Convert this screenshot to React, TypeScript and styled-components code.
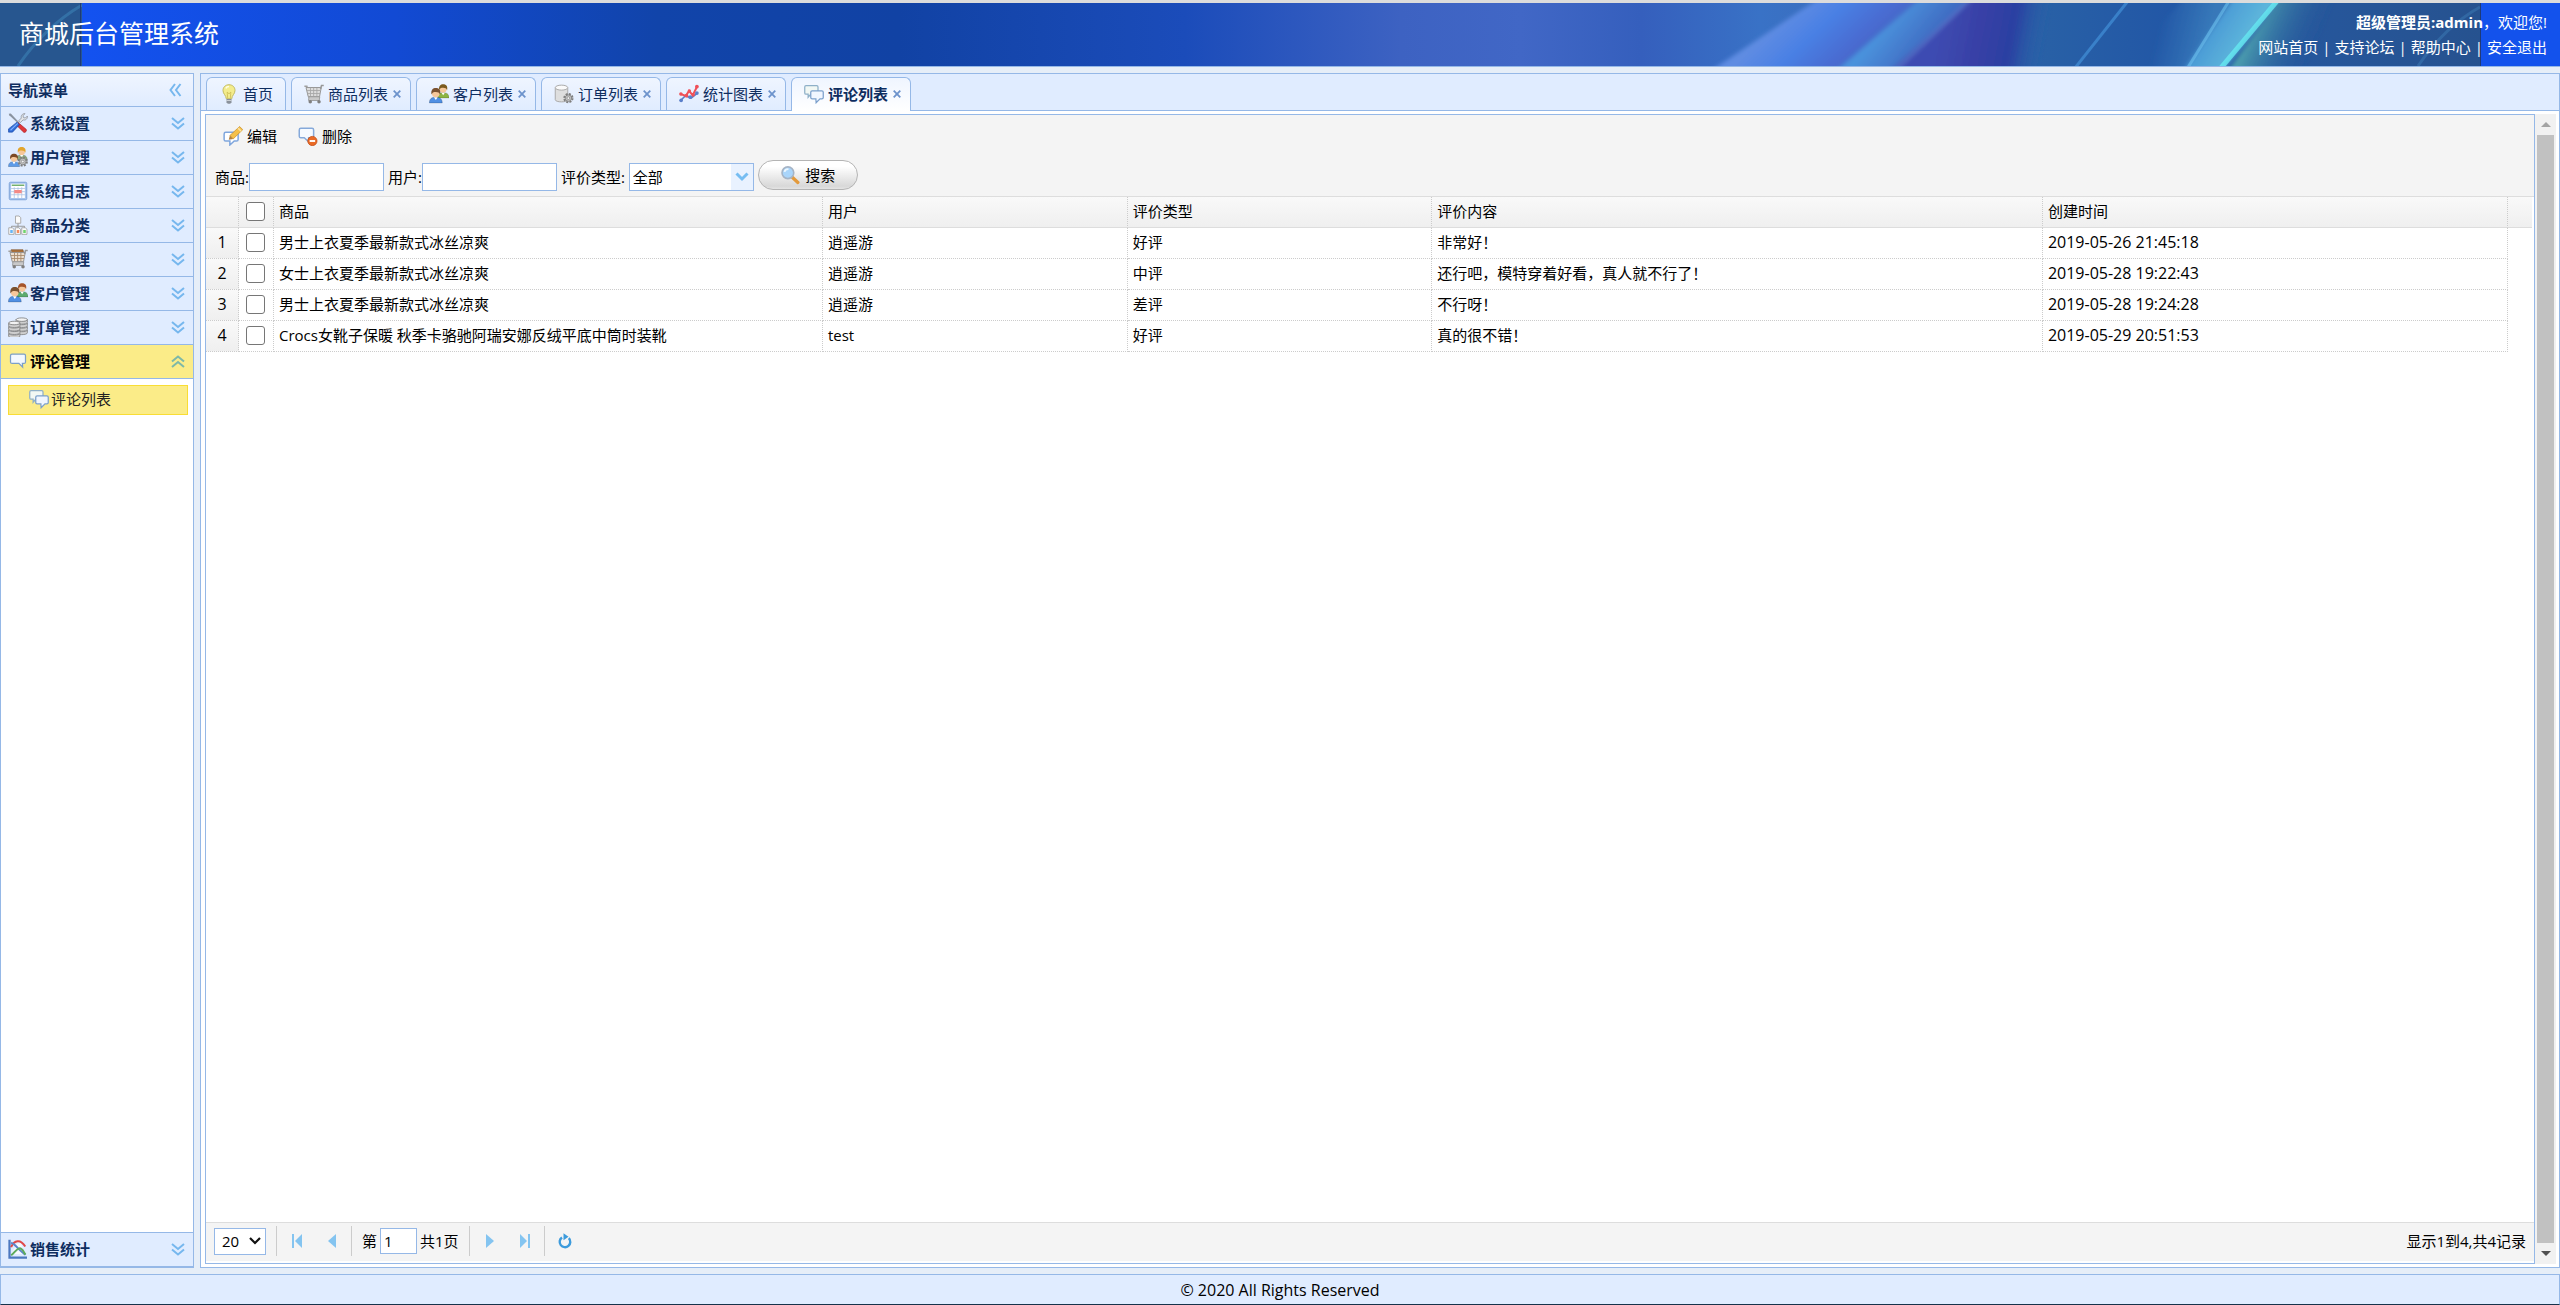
import React from "react";
import styled, { createGlobalStyle, css } from "styled-components";

const GlobalStyle = createGlobalStyle`
  * { box-sizing: border-box; }
  body {
    margin: 0;
    background: #e6eef8;
    color: #000;
    font: 15px/20px "Open Sans", "Noto Sans CJK SC", sans-serif;
  }
  button, input, select { font: inherit; color: inherit; margin: 0; }
`;

const line = "#95b8e7";

const Page = styled.div`
  display: flex;
  flex-direction: column;
  height: 100vh;
  min-width: 1200px;
`;

/* ---------- banner ---------- */

const Banner = styled.header`
  position: relative;
  display: flex;
  justify-content: space-between;
  align-items: center;
  height: 67px;
  flex: none;
  padding: 0 13px 0 19px;
  border-top: 3px solid #dcdcdc;
  border-bottom: 1px solid ${line};
  background: #1352f0;
  color: #fff;
  overflow: hidden;
`;

const BannerArt = styled.svg`
  position: absolute;
  inset: 0;
  width: 100%;
  height: 100%;
`;

const SiteTitle = styled.h1`
  position: relative;
  margin: 0 0 4px;
  font-size: 25px;
  line-height: 32px;
  font-weight: 400;
`;

const Account = styled.div`
  position: relative;
  text-align: right;
  line-height: 25px;
`;

const BannerLinks = styled.nav`
  display: flex;
  justify-content: flex-end;
  gap: 4px;
`;

const BannerLink = styled.a`
  color: #fff;
  text-decoration: none;
`;

/* ---------- frame ---------- */

const Body = styled.div`
  display: flex;
  flex: 1;
  min-height: 0;
  gap: 6px;
  margin: 6px 0;
`;

const Sidebar = styled.aside`
  display: flex;
  flex-direction: column;
  width: 194px;
  flex: none;
  border: 1px solid ${line};
  border-bottom-width: 2px;
  background: #fff;
  color: #0e2d5f;
`;

const SidebarTitle = styled.div`
  display: flex;
  align-items: center;
  justify-content: space-between;
  height: 32px;
  padding: 0 11px 0 7px;
  font-weight: 700;
  background: linear-gradient(#eff5ff, #e0ecff);
`;

const IconButton = styled.button`
  display: flex;
  align-items: center;
  justify-content: center;
  padding: 0;
  border: 0;
  background: none;
`;

const MenuHeading = styled.button<{ $open?: boolean }>`
  display: flex;
  align-items: center;
  gap: 2px;
  width: 100%;
  height: 34px;
  flex: none;
  padding: 0 8px 1px 7px;
  border: 0;
  border-top: 1px solid ${line};
  background: ${(p) => (p.$open ? "#fbec88" : "#e0ecff")};
  color: ${(p) => (p.$open ? "#000" : "#0e2d5f")};
  font-weight: 700;
  text-align: left;

  & > svg:last-child { margin-left: auto; }
`;

const MenuBody = styled.div`
  flex: 1;
  padding: 6px 5px 6px 7px;
  border-top: 1px solid ${line};
`;

const MenuLink = styled.a`
  display: flex;
  align-items: center;
  gap: 2px;
  height: 30px;
  padding: 0 0 2px 20px;
  border: 1px solid #f9dd34;
  background: #fbec88;
  color: #222;
  text-decoration: none;
`;

const Main = styled.main`
  display: flex;
  flex-direction: column;
  flex: 1;
  min-width: 0;
  border: 1px solid ${line};
  background: #fff;
`;

const TabBar = styled.div`
  display: flex;
  align-items: flex-end;
  gap: 5px;
  height: 37px;
  flex: none;
  padding: 3px 5px 0;
  border-bottom: 1px solid ${line};
  background: #e0ecff;
`;

const Tab = styled.div<{ $active?: boolean; $plain?: boolean }>`
  display: flex;
  align-items: center;
  justify-content: center;
  width: ${(p) => (p.$plain ? 80 : 120)}px;
  height: 33px;
  gap: 5px;
  padding: 0 0 1px ${(p) => (p.$plain ? 0 : 3)}px;
  border: 1px solid ${line};
  border-bottom: 0;
  border-radius: 6px 6px 0 0;
  background: linear-gradient(#eff5ff, #e0ecff);
  color: #0e2d5f;
  ${(p) =>
    p.$active &&
    css`
      height: 34px;
      margin-bottom: -1px;
      padding-bottom: 2px;
      background: linear-gradient(#eff5ff, #fff);
      font-weight: 700;
    `}
`;

const TabLabel = styled.button`
  display: flex;
  align-items: center;
  gap: 4px;
  padding: 0;
  border: 0;
  background: none;
  font-weight: inherit;
`;

const TabBody = styled.div`
  display: flex;
  flex: 1;
  min-height: 0;
  padding: 3px 3px 3px 4px;
`;

const Grid = styled.section`
  display: flex;
  flex-direction: column;
  flex: 1;
  min-width: 0;
  border: 1px solid ${line};
`;

const Scrollbar = styled.div`
  display: flex;
  flex-direction: column;
  align-items: center;
  width: 21px;
  flex: none;
  background: #f1f1f1;
`;

const ScrollArrow = styled.div`
  display: flex;
  align-items: center;
  justify-content: center;
  height: 21px;
`;

const ScrollThumb = styled.div`
  flex: 1;
  width: 17px;
  background: #c1c1c1;
`;

/* ---------- toolbar ---------- */

const Toolbar = styled.div`
  height: 82px;
  flex: none;
  border-bottom: 1px solid #ddd;
  background: #f4f4f4;
`;

const ToolRow = styled.div`
  display: flex;
  gap: 21px;
  padding: 11px 0 0 17px;
`;

const ToolButton = styled.button`
  display: flex;
  align-items: center;
  gap: 4px;
  padding: 0;
  border: 0;
  background: none;
`;

const FilterForm = styled.form`
  display: flex;
  align-items: center;
  height: 30px;
  margin-top: 14px;
  padding-left: 9px;
  gap: 4px;
`;

const Field = styled.label`
  display: flex;
  align-items: center;
  height: 28px;
  margin-top: 4px;
`;

const TextBox = styled.input`
  width: 135px;
  height: 28px;
  padding: 0 4px;
  border: 1px solid ${line};
  background: #fff;
`;

const SelectBox = styled.span`
  position: relative;
  display: block;
  margin-left: 4px;
  width: 125px;
  height: 28px;
`;

const Combo = styled.select`
  appearance: none;
  width: 100%;
  height: 100%;
  padding: 0 3px;
  border: 1px solid ${line};
  border-radius: 0;
  background: linear-gradient(#e9f2ff, #e9f2ff) right / 22px 100% no-repeat #fff;
`;

const SelectArrow = styled.svg`
  position: absolute;
  right: 5px;
  top: 9px;
  pointer-events: none;
`;

const SearchButton = styled.button`
  display: flex;
  align-items: center;
  justify-content: center;
  gap: 5px;
  width: 100px;
  height: 30px;
  border: 1px solid #b4b4b4;
  border-radius: 15px;
  background: linear-gradient(#fff 20%, #d8d8d8 90%, #e4e4e4);
`;

/* ---------- table ---------- */

const TableArea = styled.div`
  flex: 1;
  min-height: 0;
  padding-right: 2px;
`;

const Table = styled.table`
  width: 100%;
  table-layout: fixed;
  border-collapse: separate;
  border-spacing: 0;
`;

const Col = styled.col<{ $w?: string }>`
  width: ${(p) => p.$w ?? "auto"};
`;

const cell = css`
  height: 31px;
  padding: 0 5px 2px;
  text-align: left;
  font-weight: 400;
  white-space: nowrap;
  overflow: hidden;
  border-right: 1px dotted #ccc;
`;

const HeadCell = styled.th`
  ${cell}
  border-bottom: 1px solid #ddd;
  background: linear-gradient(#f9f9f9, #efefef);
  &:last-child { border-right: 0; }
`;

const Cell = styled.td`
  ${cell}
  border-bottom: 1px dotted #ccc;
`;

const DateCell = styled(Cell)`
  font-size: 16px;
`;

const RowNumber = styled.th`
  ${cell}
  padding: 0 0 2px;
  font-size: 16px;
  text-align: center;
  border-bottom: 1px dotted #ccc;
  background: linear-gradient(#f9f9f9, #efefef);
`;

const Tick = styled.input`
  appearance: none;
  display: block;
  width: 19px;
  height: 19px;
  margin: 0 0 0 2px;
  border: 1px solid #767676;
  border-radius: 3px;
  background: #fff;
  &:checked { background: #0075ff; }
`;

/* ---------- pager ---------- */

const Pager = styled.div`
  display: flex;
  align-items: center;
  height: 39px;
  flex: none;
  margin-bottom: 2px;
  padding: 0 8px 2px;
  border-top: 1px solid #ddd;
  background: #f4f4f4;
`;

const PageSize = styled(SelectBox)`
  margin: 0 6px 0 0;
  width: 52px;
  height: 27px;
`;

const PageSizeSelect = styled(Combo)`
  padding: 0 7px;
  background: #fff;
`;

const Separator = styled.span`
  width: 1px;
  height: 30px;
  margin: 0 5px 0 4px;
  background: #ccc;
`;

const PagerButton = styled(IconButton)`
  width: 30px;
  height: 30px;
  & + & { margin-left: 5px; }
`;

const PageField = styled.label`
  display: flex;
  align-items: center;
  gap: 3px;
  padding: 0 6px 0 5px;
`;

const PageInput = styled.input`
  width: 37px;
  height: 26px;
  padding: 0 3px;
  border: 1px solid ${line};
  background: #fff;
`;

const Summary = styled.span`
  margin-left: auto;
`;

const Footer = styled.footer`
  height: 31px;
  flex: none;
  padding-top: 5px;
  border: 1px solid ${line};
  border-bottom: 1px solid #16324a;
  background: #e0ecff;
  font-size: 16px;
  text-align: center;
`;

/* ---------- icons ---------- */

const Glyph = ({ children }: { children: React.ReactNode }) => (
  <svg width="20" height="20" viewBox="0 0 16 16" fill="none" aria-hidden="true">
    {children}
  </svg>
);

const Chevrons = ({ up }: { up?: boolean }) => (
  <svg width="14" height="13" viewBox="0 0 14 13" fill="none" stroke={up ? "#7db8a8" : "#76b7ee"} strokeWidth="2" aria-hidden="true">
    {up ? <path d="M1 6.5 7 1.5l6 5M1 12l6-5 6 5" /> : <path d="M1 1l6 5 6-5M1 6.5l6 5 6-5" />}
  </svg>
);

const Collapse = () => (
  <svg width="13" height="14" viewBox="0 0 13 14" fill="none" stroke="#76b7ee" strokeWidth="2" aria-hidden="true">
    <path d="M6 1 1.5 7 6 13M11.5 1 7 7l4.500 6" />
  </svg>
);

const Close = () => (
  <svg width="8" height="8" viewBox="0 0 8 8" stroke="#6d93cc" strokeWidth="1.8" aria-hidden="true">
    <path d="M.7.7l6.600 6.600M7.300.7.7 7.300" />
  </svg>
);

const Tools = () => (
  <Glyph>
    <path d="M.6.6 2.200.3 9 7.500l-.8.8L1 1.800z" fill="#8a93a0" />
    <path d="M8.300 7.800 14.500 13c1 1.100-.8 3.200-2 2.300L6.600 9.600z" fill="#e0383a" stroke="#a31c22" strokeWidth=".5" />
    <path d="M8.500 6.300 10.700 4C10 2.300 11.500.3 13.600.5L12 2.200l.4 1.500 1.500.3 1.600-1.600c.3 2.200-1.500 3.700-3.400 3.100L9.800 7.700z" fill="#e4e6e9" stroke="#9299a2" strokeWidth=".7" />
    <path d="M7.200 7.300 9.200 9.300l-5.600 6H.4v-2.600z" fill="#2f6bd6" stroke="#1a4aa5" strokeWidth=".5" />
    <path d="M2 13.800 7.800 8.300" stroke="#7fb0ff" strokeWidth=".9" />
  </Glyph>
);

const Person = ({ x, y, hair, coat, s = 1 }: { x: number; y: number; hair: string; coat: string; s?: number }) => (
  <g transform={`translate(${x} ${y}) scale(${s})`}>
    <path d="M-.2 10.400C-.2 7.200 1.600 6.400 4.200 6.400s4.600.8 4.600 4z" fill={coat} stroke="#00000040" strokeWidth=".5" />
    <path d="M3 6.400 4.300 8.400 5.600 6.400z" fill="#fff" />
    <circle cx="4.300" cy="3.700" r="2.700" fill="#f6c79a" />
    <path d="M1.300 4.600C.7 1.300 2.400 0 4.300 0s3.800 1.100 3 4.600C6.800 3.200 6 2.700 4.300 2.700s-2.500.4-3 1.900z" fill={hair} />
  </g>
);

const Gear = ({ x, y }: { x: number; y: number }) => (
  <g transform={`translate(${x} ${y})`}>
    <circle r="3.100" fill="none" stroke="#7e7e7e" strokeWidth="2" strokeDasharray="1.500 .93" />
    <circle r="2.600" fill="#c4c4c4" stroke="#7a7a7a" strokeWidth=".6" />
    <circle r="1.100" fill="#f2f2f2" stroke="#7a7a7a" strokeWidth=".5" />
  </g>
);

const UserGear = () => (
  <Glyph>
    <Person x={6.600} y={0} hair="#e2a52d" coat="#8fae80" />
    <Person x={0.500} y={5.300} hair="#7c4a24" coat="#5d9be8" />
    <Gear x={11.800} y={11.600} />
  </Glyph>
);

const Calendar = () => (
  <Glyph>
    <rect x="1" y="1" width="14" height="14" rx="1" fill="#a9c5ee" stroke="#7fa4d8" strokeWidth=".8" />
    <rect x="2.500" y="2.200" width="11" height="11.400" fill="#fff" />
    <path d="M3 3.400h10" stroke="#74b06d" strokeWidth="1.200" />
    <path d="M2.500 6h11M2.500 8.500h11M2.500 11h11M5 5v8.600M8 5v8.600M11 5v8.600" stroke="#a9bfe0" strokeWidth=".6" />
    <path d="M5 7.200h6v2.600H5z" fill="#f58a86" />
  </Glyph>
);

const Tree = () => (
  <Glyph>
    <path d="M8 6v3M2.800 11V9h10.400v2M8 9v2" stroke="#9a9a9a" strokeWidth=".8" />
    <path d="M6 .8h2.800l1.400 1.300v4.500H6z" fill="#fbfbfb" stroke="#a4a4a4" strokeWidth=".7" />
    {[
      [0.6, "#66b5f5"],
      [5.8, "#f58b5b"],
      [11, "#6fd36c"],
    ].map(([x, c]) => (
      <g key={c} transform={`translate(${x} 0)`}>
        <path d="M0 10.200h2.800l1.400 1.200v4.100H0z" fill="#fbfbfb" stroke="#a4a4a4" strokeWidth=".7" />
        <rect x="1.200" y="12" width="2" height="2.400" fill={c as string} />
      </g>
    ))}
  </Glyph>
);

const Cart = ({ goods }: { goods?: boolean }) => (
  <Glyph>
    {goods && <path d="M2.500.6h9.500l.6 3H2z" fill="#a9713c" stroke="#7f5128" strokeWidth=".5" />}
    <path d="M.3 1.800h2l1.700 8.600h8.500" stroke="#a0a0a0" strokeWidth="1.200" />
    <path d="M1.600 2.800h12.200l-1.400 7.400H3.400z" fill={goods ? "#ecdfcf" : "#dcdcdc"} stroke="#989898" strokeWidth=".8" />
    <path d="M2.300 5.200h11M2.800 7.600h10M5.200 3v7M7.700 3v7M10.300 3v7" stroke={goods ? "#a88a6c" : "#a8a8a8"} strokeWidth=".7" />
    <path d="M13.200 4 14 1.200h1.800" stroke="#989898" strokeWidth="1.200" />
    <path d="M4 10.200h8.600l-.4 3H3.600z" fill="#c9c9c9" stroke="#989898" strokeWidth=".7" />
    <circle cx="5" cy="14.200" r="1.400" fill="#808080" />
    <circle cx="12" cy="14.200" r="1.400" fill="#808080" />
  </Glyph>
);

const Clients = ({ green = "#5cab6e", hair = "#a5542b" }: { green?: string; hair?: string }) => (
  <Glyph>
    <Person x={6.800} y={0.200} hair={hair} coat={green} s={1.050} />
    <Person x={0.500} y={3.200} hair="#7a5230" coat="#4f8fe4" s={1.150} />
  </Glyph>
);

const Disks = ({ x, y, n }: { x: number; y: number; n: number }) => (
  <g transform={`translate(${x} ${y})`} stroke="#868686" strokeWidth=".7">
    {Array.from({ length: n }, (_, i) => (
      <path key={i} d="M0 1.500v2.200c0 2 9 2 9 0V1.500c0 1.800-9 1.800-9 0z" fill="#cfcfcf" transform={`translate(0 ${(n - 1 - i) * 2.800})`} />
    ))}
    <ellipse cx="4.500" cy="1.600" rx="4.500" ry="1.400" fill="#f2f2f2" />
  </g>
);

const Coins = () => (
  <Glyph>
    <Disks x={6.500} y={0.500} n={4} />
    <Disks x={0.500} y={3.200} n={4} />
  </Glyph>
);

const DiskGear = () => (
  <Glyph>
    <path d="M1 3v9.500c0 2.400 10 2.400 10 0V3z" fill="#dedede" stroke="#ababab" strokeWidth=".8" />
    <ellipse cx="6" cy="2.900" rx="5" ry="2" fill="#fafafa" stroke="#ababab" strokeWidth=".8" />
    <Gear x={11.500} y={11.300} />
  </Glyph>
);

const Bubble = () => (
  <Glyph>
    <path d="M3.200 2.500h9.600q1.200 0 1.200 1.200v5q0 1.200-1.200 1.200h-1.300l.2 3-3-3H3.200Q2 9.900 2 8.700v-5q0-1.200 1.200-1.200z" fill="#f3f8ff" stroke="#7c9fc9" />
  </Glyph>
);

const Bubbles = () => (
  <Glyph>
    <path d="M1.600 1.300h8.600q1 0 1 1v4.800q0 1-1 1H5.500L3.300 10.600V8.100H1.600q-1 0-1-1V2.300q0-1 1-1z" fill="#f2f8f4" stroke="#8fb0c8" />
    <path d="M6.500 5.500h7.800q1.100 0 1.100 1.100v4.200q0 1.100-1.100 1.100h-1.500L9.700 15l-.2-3.100h-3q-1.100 0-1.100-1.100V6.600q0-1.100 1.100-1.100z" fill="#f0f6ff" stroke="#7ba0cc" />
  </Glyph>
);

const ChartCurves = () => (
  <Glyph>
    <path d="M3 11.500 7 4l3-1.500 3.500 9.500H3z" fill="#fff" fillOpacity=".7" />
    <path d="M1.200.5v14.300h14" stroke="#4c78c0" strokeWidth="1.800" />
    <path d="M2.500 6.500C5 .8 10 0 13.800 6" stroke="#e04848" strokeWidth="1.600" />
    <path d="M2.500 3c3.500 1 7 7 11.500 9.500" stroke="#5b84cc" strokeWidth="1.600" />
    <path d="M2.500 13C5 11.500 6.500 8 9 7.500s3.500 3 5 5" stroke="#5daa5c" strokeWidth="1.600" />
  </Glyph>
);

const ChartLine = () => (
  <Glyph>
    <path d="M1.500 13 5 9.500l5 1.500 4.500-3.500" stroke="#5a7fca" strokeWidth="1.300" />
    <path d="M1.200 8 5.500 9.500 8 5.500l3 3.500 3.500-7" stroke="#ef5058" strokeWidth="1.600" />
    <g fill="#5a7fca"><circle cx="1.700" cy="13" r="1.500" /><circle cx="9" cy="10.500" r="1.500" /><circle cx="14.300" cy="7.200" r="1.500" /></g>
    <g fill="#ef5058"><circle cx="1.500" cy="8" r="1.400" /><circle cx="6" cy="9.300" r="1.500" /><circle cx="8.300" cy="5.500" r="1.400" /><circle cx="11.300" cy="8.500" r="1.400" /><circle cx="14.300" cy="2" r="1.500" /></g>
  </Glyph>
);

const Bulb = () => (
  <Glyph>
    <path d="M8 .6c3 0 4.800 2 4.800 4.600C12.800 8 10.300 9 10.200 11.800H5.800C5.700 9 3.200 8 3.200 5.200 3.200 2.600 5 .6 8 .6z" fill="#f3ec8c" stroke="#c2bb63" strokeWidth=".8" />
    <path d="M5.500 3.500C6 2.300 7 2 8 2" stroke="#fffde0" strokeWidth="1.300" />
    <path d="M7 11.500 6.500 6.500 8 7.800l1.500-1.300-.5 5" stroke="#c9b84d" strokeWidth=".6" />
    <path d="M6 12h4v2.500L9 15.700H7L6 14.500z" fill="#8a919b" />
    <path d="M6 13.200h4" stroke="#d4d8dd" strokeWidth=".7" />
  </Glyph>
);

const EditNote = () => (
  <Glyph>
    <path d="M2.200 5h8.600q1.300 0 1.300 1.300v4.400q0 1.300-1.300 1.300H9l-3.500 3.200V12H2.200Q.9 12 .9 10.700V6.300Q.9 5 2.200 5z" fill="#fff" stroke="#7fa6dd" strokeWidth="1.200" />
    <path d="M13.300.4 15.800 2.900 8.200 10.300 5.500 7.600z" fill="#f5c04a" stroke="#c8902c" strokeWidth=".6" />
    <path d="M12 1.700 14.500 4.200" stroke="#fbe3a4" strokeWidth="1.200" />
    <path d="M5.500 7.600 8.200 10.300 4.600 11z" fill="#b5803c" />
  </Glyph>
);

const DeleteNote = () => (
  <Glyph>
    <path d="M2.300 1.800h8.900q1.300 0 1.300 1.300v5q0 1.300-1.300 1.300H8.500v3.300L5 9.400H2.300Q1 9.400 1 8.100v-5q0-1.300 1.300-1.300z" fill="#f6faff" stroke="#86a9da" strokeWidth="1.200" />
    <circle cx="11.500" cy="12" r="3.700" fill="#ea6a26" stroke="#c24a12" strokeWidth=".6" />
    <path d="M9.300 12h4.400" stroke="#fff" strokeWidth="1.500" />
  </Glyph>
);

const Lens = () => (
  <Glyph>
    <path d="M9.800 9.800 14.300 14" stroke="#e39a3c" strokeWidth="2.600" strokeLinecap="round" />
    <circle cx="6.300" cy="6.200" r="4.700" fill="#a9d5fb" stroke="#a5b4c6" strokeWidth="1.300" />
    <path d="M3.600 5.500C4 4 5.200 3.300 6.800 3.400" stroke="#eef8ff" strokeWidth="1.400" />
  </Glyph>
);

const PagerGlyph = ({ d, bar }: { d: string; bar?: number }) => (
  <svg width="14" height="14" viewBox="0 0 14 14" fill="#84c4f0" aria-hidden="true">
    <path d={d} />
    {bar !== undefined && <rect x={bar} y="0" width="2" height="14" />}
  </svg>
);

const Refresh = () => (
  <svg width="16" height="17" viewBox="0 0 16 17" fill="none" aria-hidden="true">
    <path d="M5 4.500A5.300 5.300 0 1 0 11.800 5.200" stroke="#3d9bdc" strokeWidth="2.400" />
    <path d="M6.500.3v7L11.500 3.700z" fill="#3d9bdc" />
  </svg>
);

const BannerBackdrop = () => (
  <BannerArt viewBox="0 0 2560 63" preserveAspectRatio="none" aria-hidden="true">
    <defs>
      <filter id="soft" filterUnits="userSpaceOnUse" x="1600" y="-20" width="900" height="110">
        <feGaussianBlur stdDeviation="2" />
      </filter>
      <linearGradient id="sky" gradientUnits="userSpaceOnUse" x1="82" x2="2480" y1="0" y2="0">
        <stop offset="0" stopColor="#1352f0" />
        <stop offset=".13" stopColor="#124ad4" />
        <stop offset=".24" stopColor="#1144aa" />
        <stop offset=".34" stopColor="#1142a4" />
        <stop offset=".46" stopColor="#1b4cba" />
        <stop offset=".55" stopColor="#3d62c2" />
        <stop offset=".6" stopColor="#4167c6" />
        <stop offset=".65" stopColor="#355fbd" />
        <stop offset=".7" stopColor="#3972c6" />
        <stop offset=".75" stopColor="#3b6bb8" />
        <stop offset=".82" stopColor="#2860a6" />
        <stop offset=".87" stopColor="#2257a6" />
        <stop offset=".94" stopColor="#26569a" />
        <stop offset="1" stopColor="#26528f" />
      </linearGradient>
      <linearGradient id="beam" gradientUnits="userSpaceOnUse" x1="1765" y1="32" x2="1830" y2="100">
        <stop offset="0" stopColor="#5f8ce2" />
        <stop offset=".35" stopColor="#4a80e4" />
        <stop offset=".7" stopColor="#4a6cd2" />
        <stop offset="1" stopColor="#3f68c0" />
      </linearGradient>
      <linearGradient id="beam2" gradientUnits="userSpaceOnUse" x1="1878" y1="32" x2="1915" y2="62">
        <stop offset="0" stopColor="#4a92dc" />
        <stop offset="1" stopColor="#3f68c0" />
      </linearGradient>
      <linearGradient id="violet" gradientUnits="userSpaceOnUse" x1="1935" y1="32" x2="2042" y2="52">
        <stop offset="0" stopColor="#3e4cb2" />
        <stop offset=".4" stopColor="#3840a6" />
        <stop offset=".7" stopColor="#2a3fa2" />
        <stop offset="1" stopColor="#2860a6" stopOpacity="0" />
      </linearGradient>
      <linearGradient id="glow" gradientUnits="userSpaceOnUse" x1="2206" y1="32" x2="2244" y2="56">
        <stop offset="0" stopColor="#4a9ad6" />
        <stop offset="1" stopColor="#62bcdc" />
      </linearGradient>
      <linearGradient id="fade" gradientUnits="userSpaceOnUse" x1="2250" y1="32" x2="2310" y2="58">
        <stop offset="0" stopColor="#4a9cae" />
        <stop offset="1" stopColor="#26569a" stopOpacity="0" />
      </linearGradient>
      <linearGradient id="halo" gradientUnits="userSpaceOnUse" x1="2160" y1="20" x2="2208" y2="32">
        <stop offset="0" stopColor="#4a9ad0" stopOpacity="0" />
        <stop offset="1" stopColor="#4a9ad0" stopOpacity=".5" />
      </linearGradient>
    </defs>
    <rect width="82" height="63" fill="#27568f" />
    <path d="M18 63C35 38 55 18 82 2" stroke="#3c82b6" strokeWidth="3" fill="none" opacity=".6" />
    <rect x="82" width="2398" height="63" fill="url(#sky)" />
    <g filter="url(#soft)">
      <path d="M1703 73 1827-10h103L1830 73z" fill="url(#beam)" />
      <path d="M1830 73 1927-10h50L1884 73z" fill="url(#beam2)" />
      <path d="M1884 73 1977-10h120L2060 73z" fill="url(#violet)" />
      <path d="M1889 73 1977-10" stroke="#5a78cc" strokeWidth="3" opacity=".8" />
      <path d="M2110 73 2190-10h47L2180 73z" fill="url(#halo)" />
      <path d="M2224 73 2284-10h60L2300 73z" fill="url(#fade)" />
      <path d="M2180 73 2237-10h47L2218 73z" fill="url(#glow)" />
    </g>
    <path d="M2220 66 2277-2" stroke="#66eaf2" strokeWidth="5" opacity=".8" />
    <path d="M2187 66 2229-2" stroke="#6cc0ee" strokeWidth="3" opacity=".6" />
    <path d="M2075 65 2128-2" stroke="#3f8ad2" strokeWidth="3" opacity=".8" />
    <path d="M2418 63C2435 38 2455 18 2480 4" stroke="#3c7cb6" strokeWidth="3" fill="none" opacity=".5" />
    <rect x="80" width="1" height="63" fill="#1d3a78" />
    <rect x="2480" width="80" height="63" fill="#1352ec" />
    <rect x="2480" width="1" height="63" fill="#1d3a78" />
  </BannerArt>
);

/* ---------- data ---------- */

const menu = [
  { name: "系统设置", icon: <Tools /> },
  { name: "用户管理", icon: <UserGear /> },
  { name: "系统日志", icon: <Calendar /> },
  { name: "商品分类", icon: <Tree /> },
  { name: "商品管理", icon: <Cart goods /> },
  { name: "客户管理", icon: <Clients /> },
  { name: "订单管理", icon: <Coins /> },
];

const tabs = [
  { name: "首页", icon: <Bulb />, plain: true },
  { name: "商品列表", icon: <Cart /> },
  { name: "客户列表", icon: <Clients green="#8db443" hair="#7a5a1e" /> },
  { name: "订单列表", icon: <DiskGear /> },
  { name: "统计图表", icon: <ChartLine /> },
  { name: "评论列表", icon: <Bubbles />, active: true },
];

const rows = [
  { cells: ["男士上衣夏季最新款式冰丝凉爽", "逍遥游", "好评", "非常好！"], date: "2019-05-26 21:45:18" },
  { cells: ["女士上衣夏季最新款式冰丝凉爽", "逍遥游", "中评", "还行吧，模特穿着好看，真人就不行了！"], date: "2019-05-28 19:22:43" },
  { cells: ["男士上衣夏季最新款式冰丝凉爽", "逍遥游", "差评", "不行呀！"], date: "2019-05-28 19:24:28" },
  { cells: ["Crocs女靴子保暖 秋季卡骆驰阿瑞安娜反绒平底中筒时装靴", "test", "好评", "真的很不错！"], date: "2019-05-29 20:51:53" },
];

const links = ["网站首页", "支持论坛", "帮助中心", "安全退出"];

export default function App() {
  return (
    <Page>
      <GlobalStyle />
      <Banner>
        <BannerBackdrop />
        <SiteTitle>商城后台管理系统</SiteTitle>
        <Account>
          <div>
            <strong>超级管理员:admin</strong>，欢迎您!
          </div>
          <BannerLinks>
            {links.map((name, i) => (
              <React.Fragment key={name}>
                {i > 0 && <span>|</span>}
                <BannerLink href="#">{name}</BannerLink>
              </React.Fragment>
            ))}
          </BannerLinks>
        </Account>
      </Banner>

      <Body>
        <Sidebar>
          <SidebarTitle>
            导航菜单
            <IconButton type="button" aria-label="collapse">
              <Collapse />
            </IconButton>
          </SidebarTitle>
          {menu.map((m) => (
            <MenuHeading key={m.name} type="button">
              {m.icon}
              {m.name}
              <Chevrons />
            </MenuHeading>
          ))}
          <MenuHeading type="button" $open>
            <Bubble />
            评论管理
            <Chevrons up />
          </MenuHeading>
          <MenuBody>
            <MenuLink href="#">
              <Bubbles />
              评论列表
            </MenuLink>
          </MenuBody>
          <MenuHeading type="button">
            <ChartCurves />
            销售统计
            <Chevrons />
          </MenuHeading>
        </Sidebar>

        <Main>
          <TabBar>
            {tabs.map((t) => (
              <Tab key={t.name} $active={t.active} $plain={t.plain}>
                <TabLabel type="button">
                  {t.icon}
                  {t.name}
                </TabLabel>
                {!t.plain && (
                  <IconButton type="button" aria-label="close">
                    <Close />
                  </IconButton>
                )}
              </Tab>
            ))}
          </TabBar>
          <TabBody>
            <Grid>
              <Toolbar>
                <ToolRow>
                  <ToolButton type="button">
                    <EditNote />
                    编辑
                  </ToolButton>
                  <ToolButton type="button">
                    <DeleteNote />
                    删除
                  </ToolButton>
                </ToolRow>
                <FilterForm onSubmit={(e) => e.preventDefault()}>
                  <Field>
                    商品:
                    <TextBox type="text" />
                  </Field>
                  <Field>
                    用户:
                    <TextBox type="text" />
                  </Field>
                  <Field>
                    评价类型:
                    <SelectBox>
                      <Combo defaultValue="全部">
                        <option>全部</option>
                      </Combo>
                      <SelectArrow width="14" height="10" viewBox="0 0 14 10" fill="none" stroke="#76bdf2" strokeWidth="3">
                        <path d="M1.500 1.500 7 7l5.500-5.500" />
                      </SelectArrow>
                    </SelectBox>
                  </Field>
                  <SearchButton type="submit">
                    <Lens />
                    搜索
                  </SearchButton>
                </FilterForm>
              </Toolbar>

              <TableArea>
                <Table>
                  <colgroup>
                    <Col $w="33px" />
                    <Col $w="35px" />
                    <Col $w="23.6%" />
                    <Col $w="13.1%" />
                    <Col $w="13.1%" />
                    <Col $w="26.25%" />
                    <Col $w="20%" />
                    <Col />
                  </colgroup>
                  <thead>
                    <tr>
                      <HeadCell />
                      <HeadCell>
                        <Tick type="checkbox" aria-label="all" />
                      </HeadCell>
                      <HeadCell>商品</HeadCell>
                      <HeadCell>用户</HeadCell>
                      <HeadCell>评价类型</HeadCell>
                      <HeadCell>评价内容</HeadCell>
                      <HeadCell>创建时间</HeadCell>
                      <HeadCell />
                    </tr>
                  </thead>
                  <tbody>
                    {rows.map((r, i) => (
                      <tr key={i}>
                        <RowNumber scope="row">{i + 1}</RowNumber>
                        <Cell>
                          <Tick type="checkbox" aria-label={r.cells[0]} />
                        </Cell>
                        {r.cells.map((text, j) => (
                          <Cell key={j}>{text}</Cell>
                        ))}
                        <DateCell>{r.date}</DateCell>
                      </tr>
                    ))}
                  </tbody>
                </Table>
              </TableArea>

              <Pager>
                <PageSize>
                  <PageSizeSelect defaultValue="20" aria-label="page size">
                    <option>20</option>
                  </PageSizeSelect>
                  <SelectArrow width="12" height="8" viewBox="0 0 12 8" fill="none" stroke="#111" strokeWidth="2.200">
                    <path d="M1 1l5 5 5-5" />
                  </SelectArrow>
                </PageSize>
                <Separator />
                <PagerButton type="button" aria-label="first">
                  <PagerGlyph d="M12 0v14L5 7z" bar={2} />
                </PagerButton>
                <PagerButton type="button" aria-label="previous">
                  <PagerGlyph d="M11 0v14L3 7z" />
                </PagerButton>
                <Separator />
                <PageField>
                  第
                  <PageInput type="text" defaultValue="1" />
                  共1页
                </PageField>
                <Separator />
                <PagerButton type="button" aria-label="next">
                  <PagerGlyph d="M3 0v14l8-7z" />
                </PagerButton>
                <PagerButton type="button" aria-label="last">
                  <PagerGlyph d="M2 0v14l7-7z" bar={10} />
                </PagerButton>
                <Separator />
                <PagerButton type="button" aria-label="refresh">
                  <Refresh />
                </PagerButton>
                <Summary>显示1到4,共4记录</Summary>
              </Pager>
            </Grid>
            <Scrollbar>
              <ScrollArrow>
                <svg width="10" height="5" viewBox="0 0 10 5" fill="#a3a3a3" aria-hidden="true">
                  <path d="M0 5 5 0l5 5z" />
                </svg>
              </ScrollArrow>
              <ScrollThumb />
              <ScrollArrow>
                <svg width="10" height="5" viewBox="0 0 10 5" fill="#505050" aria-hidden="true">
                  <path d="M0 0l5 5 5-5z" />
                </svg>
              </ScrollArrow>
            </Scrollbar>
          </TabBody>
        </Main>
      </Body>

      <Footer>© 2020 All Rights Reserved</Footer>
    </Page>
  );
}
